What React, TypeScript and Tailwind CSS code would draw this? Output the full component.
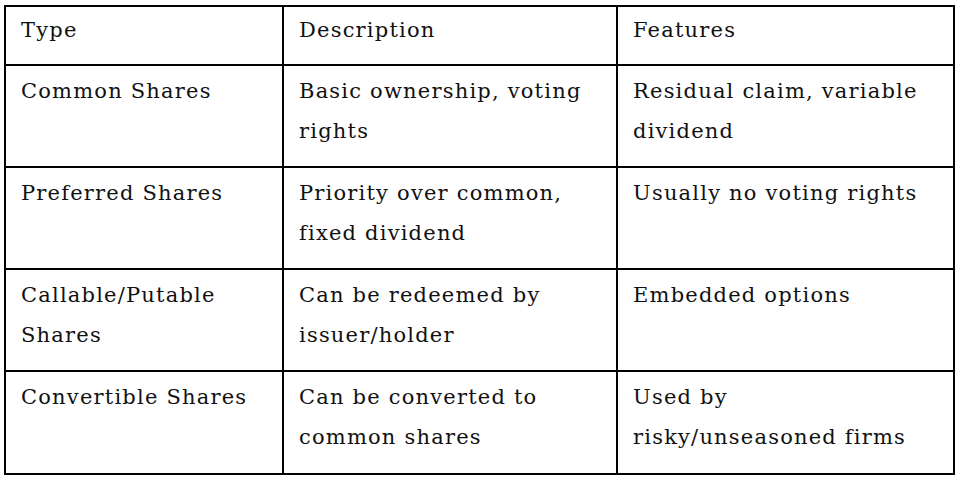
const rows: [string, string, string][] = [
  ["Common Shares", "Basic ownership, voting rights", "Residual claim, variable dividend"],
  ["Preferred Shares", "Priority over common, fixed dividend", "Usually no voting rights"],
  ["Callable/Putable Shares", "Can be redeemed by issuer/holder", "Embedded options"],
  ["Convertible Shares", "Can be converted to common shares", "Used by risky/unseasoned firms"],
];

const rowHeights = ["h-[102px]", "h-[102px]", "h-[102px]", "h-[101px]"];

function Cell({ text, last, head }: { text: string; last?: boolean; head?: boolean }) {
  return (
    <div
      className={
        "pl-[15px] pr-[16px] " +
        (head ? "pt-[3px] " : "pt-[5px] ") +
        (last ? "" : "border-r-2 border-black")
      }
    >
      {text}
    </div>
  );
}

export default function App() {
  return (
    <div className="w-[962px] h-[484px] bg-white pt-[5px] pl-[4px]">
      <div
        className="w-[951px] border-2 border-black text-[21px] leading-[40px] tracking-[1.2px] text-[#111]"
        style={{ fontFamily: '"DejaVu Serif", serif' }}
      >
        <div className="grid grid-cols-[278px_334px_335px] h-[59px] border-b-2 border-black">
          <Cell text="Type" head />
          <Cell text="Description" head />
          <Cell text="Features" last head />
        </div>
        {rows.map((r, i) => (
          <div
            key={r[0]}
            className={
              "grid grid-cols-[278px_334px_335px] " +
              rowHeights[i] +
              (i < rows.length - 1 ? " border-b-2 border-black" : "")
            }
          >
            <Cell text={r[0]} />
            <Cell text={r[1]} />
            <Cell text={r[2]} last />
          </div>
        ))}
      </div>
    </div>
  );
}
